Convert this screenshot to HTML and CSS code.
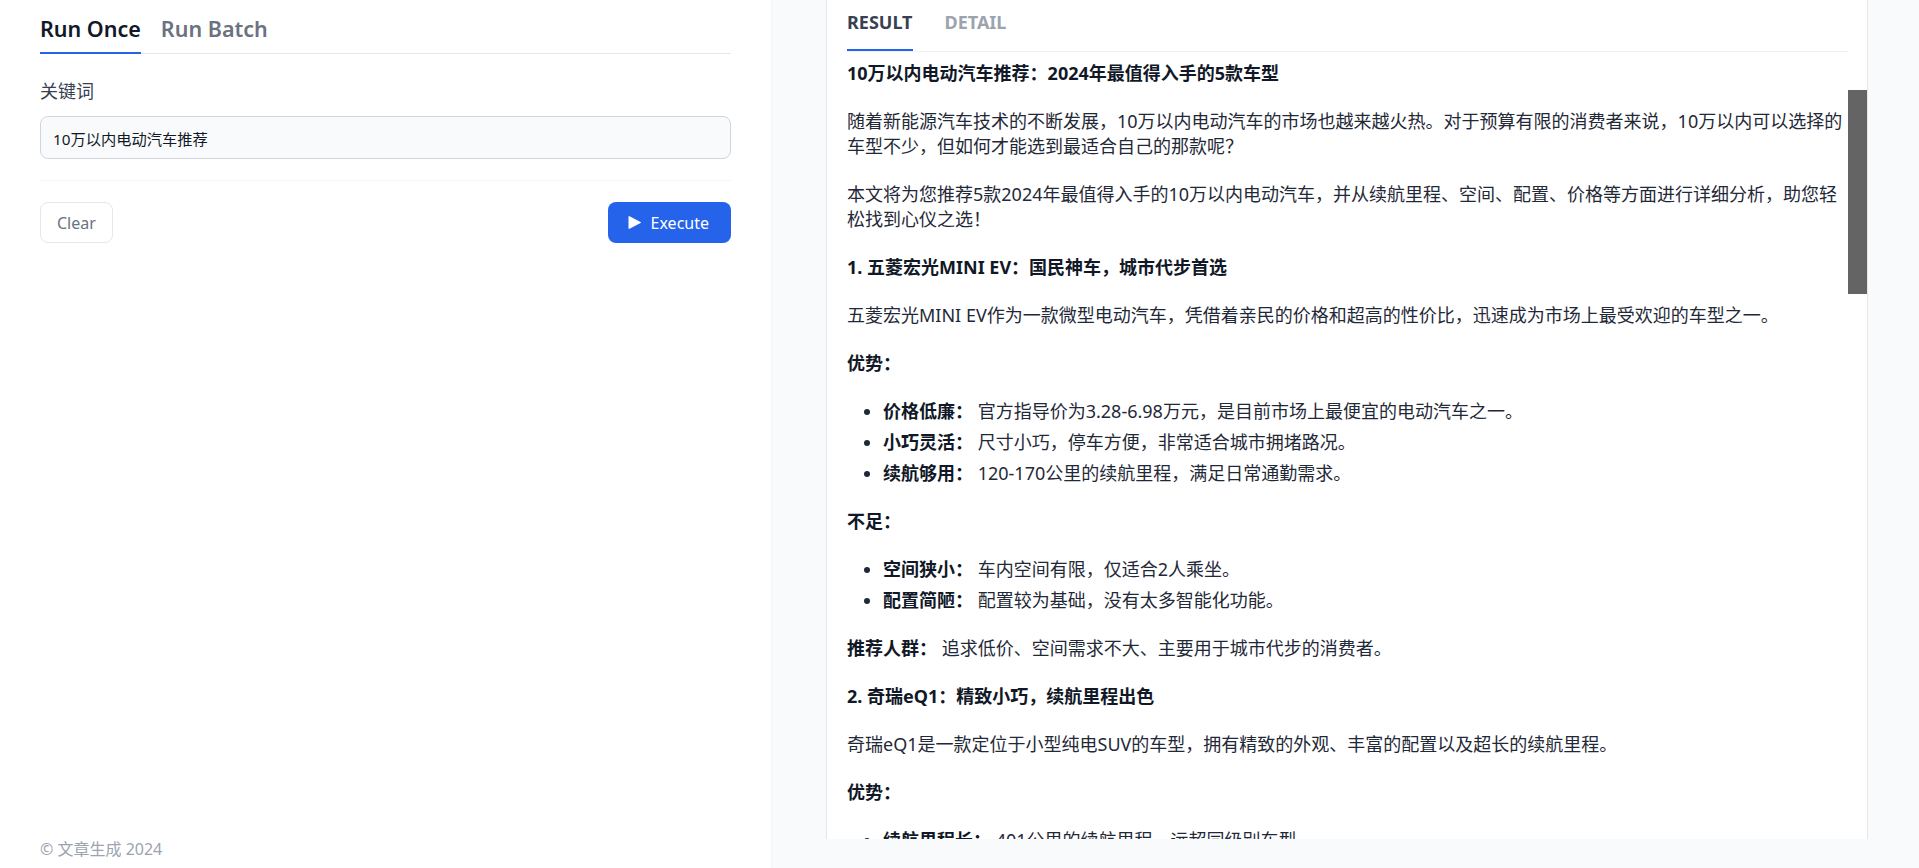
FILE: index.html
```html
<!DOCTYPE html>
<html lang="zh-CN">
<head>
<meta charset="utf-8">
<title>文章生成</title>
<link rel="stylesheet" href="styles.css">
</head>
<body>
<div class="app">
  <aside class="left">
    <nav class="tabs">
      <button class="tab active">Run Once</button>
      <button class="tab">Run Batch</button>
    </nav>
    <div class="field">
      <label class="label">关键词</label>
      <div class="input">10万以内电动汽车推荐</div>
    </div>
    <hr class="sep">
    <div class="actions">
      <button class="btn clear">Clear</button>
      <button class="btn exec">
        <svg class="play" width="13" height="13" viewBox="0 0 13 13"><polygon points="1.2,0.8 12.2,6.5 1.2,12.2" fill="#fff" stroke="#fff" stroke-width="1.4" stroke-linejoin="round"/></svg>
        <span>Execute</span>
      </button>
    </div>
    <footer class="foot">© 文章生成 2024</footer>
  </aside>
  <main class="right">
    <section class="card">
      <div class="rtabs">
        <span class="rtab active">RESULT</span>
        <span class="rtab">DETAIL</span>
      </div>
      <article class="doc">
        <h2 class="h">10万以内电动汽车推荐：2024年最值得入手的5款车型</h2>
        <p>随着新能源汽车技术的不断发展，10万以内电动汽车的市场也越来越火热。对于预算有限的消费者来说，10万以内可以选择的车型不少，但如何才能选到最适合自己的那款呢？</p>
        <p>本文将为您推荐5款2024年最值得入手的10万以内电动汽车，并从续航里程、空间、配置、价格等方面进行详细分析，助您轻松找到心仪之选！</p>
        <h3 class="h">1. 五菱宏光MINI EV：国民神车，城市代步首选</h3>
        <p>五菱宏光MINI EV作为一款微型电动汽车，凭借着亲民的价格和超高的性价比，迅速成为市场上最受欢迎的车型之一。</p>
        <p><strong>优势：</strong></p>
        <ul>
          <li><strong>价格低廉：</strong> 官方指导价为3.28-6.98万元，是目前市场上最便宜的电动汽车之一。</li>
          <li><strong>小巧灵活：</strong> 尺寸小巧，停车方便，非常适合城市拥堵路况。</li>
          <li><strong>续航够用：</strong> 120-170公里的续航里程，满足日常通勤需求。</li>
        </ul>
        <p><strong>不足：</strong></p>
        <ul>
          <li><strong>空间狭小：</strong> 车内空间有限，仅适合2人乘坐。</li>
          <li><strong>配置简陋：</strong> 配置较为基础，没有太多智能化功能。</li>
        </ul>
        <p><strong>推荐人群：</strong> 追求低价、空间需求不大、主要用于城市代步的消费者。</p>
        <h3 class="h">2. 奇瑞eQ1：精致小巧，续航里程出色</h3>
        <p>奇瑞eQ1是一款定位于小型纯电SUV的车型，拥有精致的外观、丰富的配置以及超长的续航里程。</p>
        <p><strong>优势：</strong></p>
        <ul>
          <li><strong>续航里程长：</strong> 401公里的续航里程，远超同级别车型。</li>
        </ul>
      </article>
      <div class="thumb"></div>
    </section>
  </main>
</div>
</body>
</html>
```

FILE: styles.css
```css
* { box-sizing: border-box; }

html, body {
  margin: 0;
  padding: 0;
  height: 868px;
  overflow: hidden;
  font-family: "Noto Sans", "Noto Sans CJK SC", sans-serif;
  color: #1f2937;
  background: #fff;
}

.app {
  display: grid;
  grid-template-columns: 772px 1fr;
  grid-template-rows: 868px;
  height: 868px;
  overflow: hidden;
}

/* ---------- left panel ---------- */
.left {
  display: flex;
  flex-direction: column;
  height: 868px;
  padding: 0 40px 8px 40px;
  border-right: 1px solid #f3f4f6;
  background: #fff;
}

.tabs {
  display: flex;
  gap: 20px;
  border-bottom: 1px solid #e5e7eb;
}

.tab {
  font-family: inherit;
  font-size: 21.5px;
  font-weight: 600;
  line-height: 30px;
  padding: 14px 0 8px 0;
  margin: 0 0 -1px 0;
  border: 0;
  border-bottom: 2px solid transparent;
  background: none;
  color: #6b7280;
  cursor: pointer;
}

.tab.active {
  color: #111827;
  border-bottom-color: #2563eb;
}

.field {
  display: flex;
  flex-direction: column;
  margin-top: 25px;
}

.label {
  font-size: 18px;
  line-height: 25px;
  color: #374151;
}

.input {
  margin-top: 12px;
  height: 43px;
  display: flex;
  align-items: center;
  padding: 0 12px;
  border: 1px solid #d1d5db;
  border-radius: 8px;
  background: #f9fafb;
  font-size: 15.25px;
  color: #111827;
}

.sep {
  margin: 21px 0 0 0;
  border: 0;
  border-top: 1px solid #f3f4f6;
  height: 0;
}

.actions {
  margin-top: 21px;
  display: flex;
  justify-content: space-between;
}

.btn {
  height: 41px;
  border-radius: 8px;
  font-family: inherit;
  font-size: 16px;
  display: inline-flex;
  align-items: center;
  cursor: pointer;
}

.btn.clear {
  padding: 0 16px;
  background: #fff;
  border: 1px solid #e5e7eb;
  color: #6b7280;
}

.btn.exec {
  padding: 0 22px 0 20px;
  gap: 10px;
  background: #2563eb;
  border: 0;
  color: #fff;
}

.play { display: block; }

.foot {
  margin-top: auto;
  font-size: 16px;
  line-height: 22px;
  color: #9ca3af;
}

/* ---------- right panel ---------- */
.right {
  height: 868px;
  background: #f9fafb;
  padding: 0 51px 29px 54px;
  min-width: 0;
  overflow: hidden;
}

.card {
  position: relative;
  height: 839px;
  background: #fff;
  border-left: 1px solid #e5e7eb;
  border-right: 1px solid #e5e7eb;
  padding: 0 19px 0 20px;
  overflow: hidden;
}

.rtabs {
  display: flex;
  gap: 32px;
  border-bottom: 1px solid #f0f1f3;
}

.rtab {
  font-size: 18px;
  font-weight: 700;
  line-height: 25px;
  padding: 10px 0 14px 0;
  border-bottom: 2px solid transparent;
  color: #9ca3af;
}

.rtab.active {
  color: #374151;
  border-bottom-color: #2563eb;
}

.doc {
  padding-top: 9px;
  font-size: 18px;
  line-height: 25px;
  color: #1f2937;
}

.doc > * { margin: 0; }
.doc > * + * { margin-top: 23px; }

.doc .h {
  font-size: 18px;
  font-weight: 700;
  line-height: 25px;
  color: #111827;
}

.doc strong {
  font-weight: 700;
  color: #111827;
}

.doc ul {
  padding-left: 36px;
  list-style: disc;
}

.doc li + li { margin-top: 6px; }

.thumb {
  position: absolute;
  top: 90px;
  right: 0;
  width: 19px;
  height: 204px;
  background: #646464;
}
```
